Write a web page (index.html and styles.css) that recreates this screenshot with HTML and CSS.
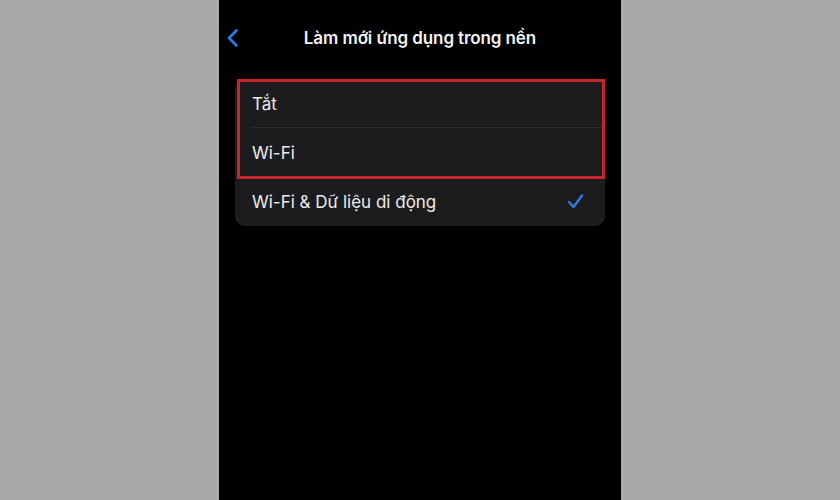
FILE: index.html
```html
<!DOCTYPE html>
<html lang="vi">
<head>
  <meta charset="UTF-8">
  <meta name="viewport" content="width=device-width, initial-scale=1.0">
  <title>Làm mới ứng dụng trong nền</title>
  <link rel="stylesheet" href="styles.css">
</head>
<body>
  <div class="phone">
    <header class="nav">
      <svg class="back" width="13" height="18" viewBox="0 0 13 18">
        <path d="M10.5 1.5 L3 9 L10.5 16.5" fill="none" stroke="#2e7be6" stroke-width="2.6" stroke-linecap="round" stroke-linejoin="round"/>
      </svg>
      <h1 class="title">Làm mới ứng dụng trong nền</h1>
    </header>

    <div class="card">
      <div class="row">
        <span>Tắt</span>
      </div>
      <div class="row">
        <span>Wi-Fi</span>
      </div>
      <div class="row last">
        <span>Wi-Fi &amp; Dữ liệu di động</span>
        <svg class="check" width="17" height="15" viewBox="0 0 17 15">
          <path d="M2 8 L6.5 13 L15 1.5" fill="none" stroke="#2e7be6" stroke-width="2.4" stroke-linecap="round" stroke-linejoin="round"/>
        </svg>
      </div>
      <!-- highlight around the first two options -->
      <div class="highlight"></div>
    </div>
  </div>
</body>
</html>
```

FILE: styles.css
```css
body {
  margin: 0;
  padding: 0;
  background-color: #a9a9a9;
  font-family: Inter, "Noto Sans", sans-serif;
}

.phone {
  width: 402px;
  height: 500px;
  margin: 0 auto;
  background-color: #000000;
  overflow: hidden;
}

.nav {
  position: relative;
  height: 76px;
  display: flex;
  align-items: center;
  justify-content: center;
}

.back {
  position: absolute;
  left: 7px;
  top: 29px;
}

.title {
  margin: 0;
  font-size: 17px;
  font-weight: 600;
  color: #f2f2f2;
  letter-spacing: -0.1px;
}

.card {
  position: relative;
  margin: 3px 16px 0;
  background-color: #1c1c1e;
  border-radius: 10px;
}

.row {
  height: 49px;
  margin-left: 17px;
  padding-right: 21px;
  display: flex;
  align-items: center;
  justify-content: space-between;
  font-size: 17px;
  color: #ececec;
  box-shadow: inset 0 -1px 0 #2a2a2c;
}

.row.last {
  box-shadow: none;
}

.check {
  display: block;
}

.highlight {
  position: absolute;
  left: 2px;
  right: 0;
  top: 0;
  height: 100px;
  border: 3px solid #c4262b;
  box-sizing: border-box;
}
```
